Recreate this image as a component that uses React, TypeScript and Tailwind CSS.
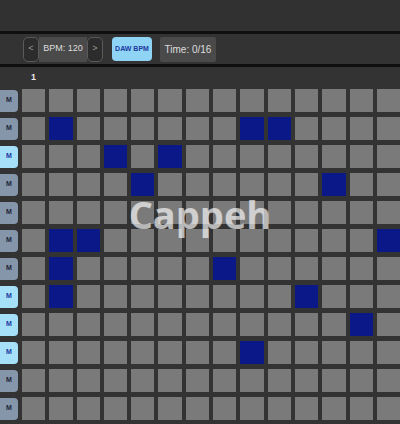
import React from "react"

const ROWS = 12
const COLS = 16

// active steps per row (column indexes)
const pattern: number[][] = [
  [],
  [1, 8, 9],
  [3, 5],
  [4, 11],
  [],
  [1, 2, 13],
  [1, 7],
  [1, 10],
  [12],
  [8],
  [],
  [],
]

const activeMutes = [2, 7, 8, 9]

export default function App() {
  return (
    <div
      className="relative w-[400px] h-[424px] overflow-hidden bg-[#333333]"
      style={{ fontFamily: '"Liberation Sans", Arial, sans-serif' }}
    >
      {/* TOP BAR */}
      <div className="h-[34px] bg-[#313131] border-b-[3px] border-[#0f0f0f]" />

      {/* TOOLBAR */}
      <div className="h-[33px] flex items-center pl-[23px] border-b-[3px] border-[#0f0f0f] bg-[#333333]">
        <div className="flex items-center">
          <button className="w-[16px] h-[25px] rounded-[5px] border border-[#5a5a5a] bg-[#2c2c2c] text-[#9a9a9a] text-[9px] flex items-center justify-center">
            &lt;
          </button>
          <div className="w-[48px] h-[25px] bg-[#4a4a4a] text-[#dddddd] text-[9px] flex items-center justify-center">
            BPM: 120
          </div>
          <button className="w-[16px] h-[25px] rounded-[5px] border border-[#5a5a5a] bg-[#2c2c2c] text-[#9a9a9a] text-[9px] flex items-center justify-center">
            &gt;
          </button>
        </div>
        <button className="ml-[9px] w-[40px] h-[24px] rounded-[4px] bg-[#8fd3f5] text-[#1b3aa0] text-[7px] font-bold flex items-center justify-center">
          DAW BPM
        </button>
        <div className="ml-[8px] w-[56px] h-[25px] rounded-[2px] bg-[#4a4a4a] text-[#dddddd] text-[10px] flex items-center justify-center">
          Time: 0/16
        </div>
      </div>

      {/* STEP GRID */}
      <div className="flex flex-col">
        <div className="h-[22px] flex items-center">
          <span className="ml-[31px] text-[9px] font-bold text-[#e8e8e8]">1</span>
        </div>
        <div className="flex flex-col gap-y-[5px]">
          {Array.from({ length: ROWS }).map((_, r) => {
            const muted = activeMutes.includes(r)
            return (
              <div key={r} className="flex items-center gap-x-[4px]">
                <button
                  className={
                    muted
                      ? "w-[22px] shrink-0 -ml-[4px] h-[22px] rounded-[4px] bg-[#a6dff8] text-[#1b3aa0] text-[7px] font-bold flex items-center justify-center pl-[4px]"
                      : "w-[22px] shrink-0 -ml-[4px] h-[22px] rounded-[4px] bg-[#8696aa] text-[#1a2538] text-[7px] font-bold flex items-center justify-center pl-[4px]"
                  }
                >
                  M
                </button>
                <div className="flex gap-x-[4px]">
                  {Array.from({ length: COLS }).map((_, c) => (
                    <div
                      key={c}
                      className={
                        pattern[r].includes(c)
                          ? "w-[23.3px] h-[23px] shrink-0 bg-[#0b1888]"
                          : "w-[23.3px] h-[23px] shrink-0 bg-[#7a7a7a]"
                      }
                    />
                  ))}
                </div>
              </div>
            )
          })}
        </div>
      </div>

      {/* WATERMARK */}
      <div
        className="absolute left-0 right-0 top-[186px] text-center text-[38px] font-bold text-white/65 pointer-events-none"
        style={{ fontFamily: '"Open Sans", sans-serif' }}
      >
        Cappeh
      </div>
    </div>
  )
}
